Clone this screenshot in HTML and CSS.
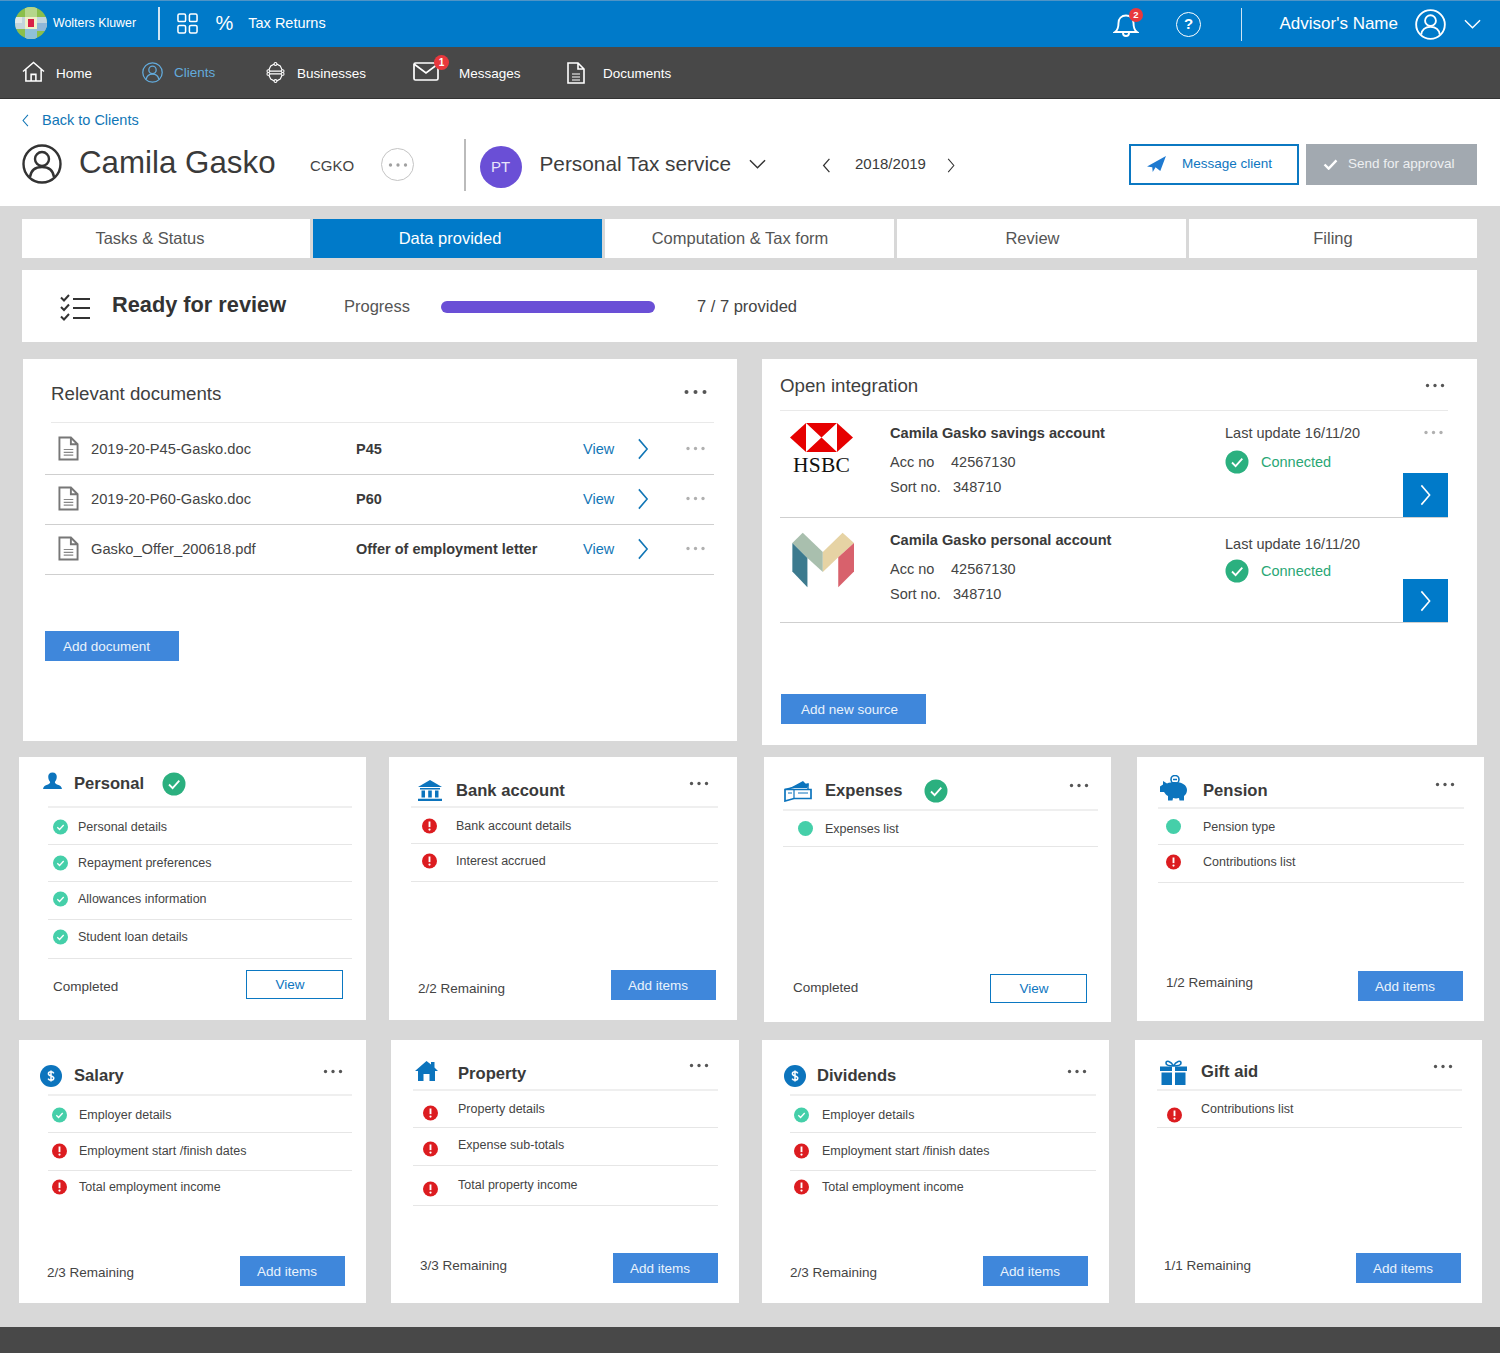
FILE: index.html
```html
<!DOCTYPE html>
<html lang="en">
<head>
<meta charset="utf-8">
<title>Camila Gasko - Data provided</title>
<link rel="stylesheet" href="styles.css">
</head>
<body>
<svg class="defs" width="0" height="0" aria-hidden="true">
  <symbol id="person" viewBox="0 0 40 40"><circle cx="20" cy="20" r="18.5" fill="none" stroke="currentColor" stroke-width="2.4"/><circle cx="20" cy="15" r="7" fill="none" stroke="currentColor" stroke-width="2.4"/><path d="M8 33c1-7 6-10 12-10s11 3 12 10" fill="none" stroke="currentColor" stroke-width="2.4"/></symbol>
  <symbol id="dots" viewBox="0 0 24 6"><circle cx="3" cy="3" r="2" fill="currentColor"/><circle cx="12" cy="3" r="2" fill="currentColor"/><circle cx="21" cy="3" r="2" fill="currentColor"/></symbol>
  <symbol id="ok" viewBox="0 0 16 16"><circle cx="8" cy="8" r="8" fill="#45cfa9"/><path d="M4.6 8.2l2.4 2.4 4.4-4.8" fill="none" stroke="#fff" stroke-width="1.4"/></symbol>
  <symbol id="bigok" viewBox="0 0 24 24"><circle cx="12" cy="12" r="11.5" fill="#2bb07f"/><path d="M7 12.5l3.6 3.6L17.3 8.6" fill="none" stroke="#fff" stroke-width="1.8"/></symbol>
  <symbol id="warn" viewBox="0 0 16 16"><circle cx="8" cy="8" r="8" fill="#dc1c20"/><path d="M8 3.2v6" stroke="#fff" stroke-width="2"/><circle cx="8" cy="11.8" r="1.2" fill="#fff"/></symbol>
  <symbol id="dollar" viewBox="0 0 22 22"><circle cx="11" cy="11" r="11" fill="#0c74bd"/><path d="M13.8 8.300c-.5-1-1.500-1.500-2.800-1.500-1.400 0-2.600.7-2.600 2 0 2.900 5.400 1.400 5.400 4.300 0 1.300-1.200 2.100-2.800 2.100-1.300 0-2.300-.6-2.900-1.600M11 5.400v11.200" fill="none" stroke="#fff" stroke-width="1.500"/></symbol>
  <symbol id="file" viewBox="0 0 22 26"><path d="M1.500 1.500h12l7 7v16h-19z M13.500 1.500v7h7" fill="none" stroke="#777" stroke-width="2"/><path d="M6 14h10M6 17h10M6 20h10" stroke="#888" stroke-width="1.200"/></symbol>
  <symbol id="chev" viewBox="0 0 12 24"><path d="M1.500 1.500L10.500 12 1.500 22.500" fill="none" stroke="currentColor" stroke-width="1.700"/></symbol>
  <symbol id="chevl" viewBox="0 0 10 18"><path d="M8.500 1L1.500 9l7 8" fill="none" stroke="currentColor" stroke-width="1.500"/></symbol>
  <symbol id="chevd" viewBox="0 0 18 10"><path d="M1 1l8 8 8-8" fill="none" stroke="currentColor" stroke-width="1.500"/></symbol>
</svg>

<header class="topbar">
  <div class="brand">
    <svg class="globe" viewBox="0 0 32 32" aria-hidden="true">
      <defs><clipPath id="globeclip"><ellipse cx="16" cy="16" rx="16" ry="16"/></clipPath></defs>
      <g clip-path="url(#globeclip)">
        <rect width="32" height="32" fill="#8bbf4c"/>
        <rect x="10" y="0" width="12" height="32" fill="#b5d68c"/>
        <rect x="0" y="10" width="32" height="12" fill="#c2d4dc"/>
        <rect x="0" y="10" width="7" height="6" fill="#dfe8e8"/>
        <rect x="22" y="16" width="10" height="8" fill="#8fb6d8"/>
        <rect x="10" y="22" width="12" height="10" fill="#8fc1d9"/>
        <rect x="10" y="10" width="12" height="12" fill="#eef0c8"/>
        <rect x="13" y="12" width="6" height="8" fill="#d81f47"/>
      </g>
    </svg>
    <span class="brand-name">Wolters Kluwer</span>
  </div>
  <span class="vsep vsep-a"></span>
  <svg class="apps" viewBox="0 0 22 22" aria-hidden="true"><g fill="none" stroke="#fff" stroke-width="1.600"><rect x="1" y="1" width="8" height="8" rx="1.500"/><rect x="13" y="1" width="8" height="8" rx="1.500"/><rect x="1" y="13" width="8" height="8" rx="1.500"/><rect x="13" y="13" width="8" height="8" rx="1.500"/></g></svg>
  <span class="percent">%</span>
  <span class="app-name">Tax Returns</span>
  <div class="top-right">
    <span class="icon-badge bell-wrap">
      <svg class="bell" viewBox="0 0 26 26" aria-hidden="true"><path d="M2 21c3-2 3.500-5 3.500-9 0-4.500 3-7.500 7.500-7.500s7.500 3 7.500 7.500c0 4 .5 7 3.500 9z M10 22c0 2 1.300 3 3 3s3-1 3-3" fill="none" stroke="#fff" stroke-width="1.900"/></svg>
      <span class="badge badge-bell">2</span>
    </span>
    <span class="help">?</span>
    <span class="vsep vsep-b"></span>
    <span class="advisor">Advisor's Name</span>
    <svg class="advisor-ico"><use href="#person"/></svg>
    <svg class="advisor-chev"><use href="#chevd"/></svg>
  </div>
</header>

<nav class="mainnav">
  <a class="nav-item nav-home">
    <svg class="nav-ico ico-home" viewBox="0 0 24 22" aria-hidden="true"><path d="M1 11L12 1.500 23 11M4 9v12h16V9M9.500 21v-7h5v7" fill="none" stroke="#fff" stroke-width="1.600"/></svg>
    Home
  </a>
  <a class="nav-item nav-clients">
    <svg class="nav-ico ico-clients"><use href="#person"/></svg>
    Clients
  </a>
  <a class="nav-item nav-biz">
    <svg class="nav-ico ico-biz" viewBox="0 0 20 22" aria-hidden="true"><g fill="none" stroke="#fff" stroke-width="1.300"><path d="M2.500 9.500L5 4l5-2.500L15 4l2.500 5.500z"/><path d="M2.500 12.500L5 18l5 2.500 5-2.500 2.500-5.500z"/></g><g fill="#484848" stroke="#fff" stroke-width="1.100"><circle cx="10" cy="2" r="1.500"/><circle cx="2.500" cy="9.500" r="1.500"/><circle cx="17.500" cy="9.500" r="1.500"/><circle cx="2.500" cy="12.500" r="1.500"/><circle cx="17.500" cy="12.500" r="1.500"/><circle cx="10" cy="20" r="1.500"/></g></svg>
    Businesses
  </a>
  <a class="nav-item nav-msg">
    <span class="icon-badge">
      <svg class="nav-ico ico-mail" viewBox="0 0 26 19" aria-hidden="true"><rect x="1" y="1" width="24" height="17" rx="1.500" fill="none" stroke="#fff" stroke-width="1.700"/><path d="M1 2l12 9 12-9" fill="none" stroke="#fff" stroke-width="1.700"/></svg>
      <span class="badge badge-mail">1</span>
    </span>
    Messages
  </a>
  <a class="nav-item nav-docs">
    <svg class="nav-ico ico-doc" viewBox="0 0 18 22" aria-hidden="true"><path d="M1 1h10l6 6v14H1z M11 1v6h6" fill="none" stroke="#fff" stroke-width="1.600"/><path d="M5 12h8M5 15h8M5 18h8" stroke="#fff" stroke-width="1.200"/></svg>
    Documents
  </a>
</nav>

<section class="subhead">
  <a class="back"><svg class="back-chev"><use href="#chevl"/></svg>Back to Clients</a>
  <div class="client-row">
    <svg class="client-ico"><use href="#person"/></svg>
    <h1 class="client-name">Camila Gasko</h1>
    <span class="client-code">CGKO</span>
    <span class="client-more"><svg class="client-dots"><use href="#dots"/></svg></span>
    <span class="client-sep"></span>
    <span class="pt">PT</span>
    <span class="service">Personal Tax service</span>
    <svg class="service-chev"><use href="#chevd"/></svg>
    <svg class="year-chev year-prev"><use href="#chevl"/></svg>
    <span class="year">2018/2019</span>
    <svg class="year-chev year-next"><use href="#chev"/></svg>
    <div class="actions">
      <button class="btn-message">
        <svg class="plane" viewBox="0 0 20 18" aria-hidden="true"><path d="M0 11L20 0 14 16 9 12l-3 5-.5-5z" fill="#1f7ad0"/></svg>
        Message client
      </button>
      <button class="btn-approve">
        <svg class="tick" viewBox="0 0 16 12" aria-hidden="true"><path d="M1.500 6l4.500 4.500L14.500 1.500" fill="none" stroke="#fff" stroke-width="2.600"/></svg>
        Send for approval
      </button>
    </div>
  </div>
</section>

<main class="content">
  <div class="tabs">
    <a class="tab tab-tasks">Tasks &amp; Status</a>
    <a class="tab tab-active">Data provided</a>
    <a class="tab tab-comp">Computation &amp; Tax form</a>
    <a class="tab tab-review">Review</a>
    <a class="tab tab-filing">Filing</a>
  </div>

  <div class="progress-panel">
    <svg class="checklist" viewBox="0 0 30 27" aria-hidden="true"><g fill="none" stroke="#333" stroke-width="2"><path d="M1 3.500l3 3L9 1M1 13l3 3 5-5.500M1 22.500l3 3 5-5.500"/><path d="M13 5h17M13 14h17M13 24h17"/></g></svg>
    <strong class="progress-title">Ready for review</strong>
    <span class="progress-label">Progress</span>
    <span class="progress-bar"></span>
    <span class="progress-count">7 / 7 provided</span>
  </div>

  <div class="top-cards">
    <section class="panel docs">
      <div class="docs-head">
        <h2 class="panel-title">Relevant documents</h2>
        <svg class="more more-dark docs-more"><use href="#dots"/></svg>
      </div>
      <div class="doc-row doc-first">
        <svg class="doc-ico"><use href="#file"/></svg>
        <span class="doc-name">2019-20-P45-Gasko.doc</span>
        <strong class="doc-type">P45</strong>
        <a class="doc-view">View</a>
        <svg class="doc-chev"><use href="#chev"/></svg>
        <svg class="more more-light"><use href="#dots"/></svg>
      </div>
      <div class="doc-row">
        <svg class="doc-ico"><use href="#file"/></svg>
        <span class="doc-name">2019-20-P60-Gasko.doc</span>
        <strong class="doc-type">P60</strong>
        <a class="doc-view">View</a>
        <svg class="doc-chev"><use href="#chev"/></svg>
        <svg class="more more-light"><use href="#dots"/></svg>
      </div>
      <div class="doc-row">
        <svg class="doc-ico"><use href="#file"/></svg>
        <span class="doc-name">Gasko_Offer_200618.pdf</span>
        <strong class="doc-type">Offer of employment letter</strong>
        <a class="doc-view">View</a>
        <svg class="doc-chev"><use href="#chev"/></svg>
        <svg class="more more-light"><use href="#dots"/></svg>
      </div>
      <button class="btn-fill btn-add-doc">Add document</button>
    </section>

    <section class="panel integ">
      <div class="integ-head">
        <h2 class="panel-title">Open integration</h2>
        <svg class="more more-dark integ-more"><use href="#dots"/></svg>
      </div>
      <div class="acct acct-a">
        <div class="acct-logo">
          <svg class="hsbc" viewBox="0 0 63 29" aria-hidden="true"><path d="M0 14.500L16 0h31l16 14.500L47 29H16z" fill="#e60000"/><path d="M16 0l15.500 14.500L16 29zM47 0L31.500 14.500 47 29z" fill="#fff"/></svg>
          <span class="hsbc-name">HSBC</span>
        </div>
        <div class="acct-info">
          <strong class="acct-title">Camila Gasko savings account</strong>
          <div class="acct-line"><span class="lbl-acc">Acc no</span><span>42567130</span></div>
          <div class="acct-line"><span class="lbl-sort">Sort no.</span><span>348710</span></div>
        </div>
        <div class="acct-status">
          <div class="update-row"><span>Last update 16/11/20</span><svg class="more more-light acct-more"><use href="#dots"/></svg></div>
          <div class="conn"><svg class="conn-ico"><use href="#bigok"/></svg>Connected</div>
          <a class="go"><svg class="go-chev"><use href="#chev"/></svg></a>
        </div>
      </div>
      <div class="acct acct-b">
        <div class="acct-logo">
          <svg class="monzo" viewBox="90 400 197 172" aria-hidden="true"><path d="M97 435l31-30 60 57v60l-46-42z" fill="#a9bfae"/><path d="M188 462l59-57 34 30-47 43-46 44z" fill="#e6d3a4"/><path d="M97 435l45 45v87l-45-47z" fill="#3c7a8e"/><path d="M281 435v85l-47 47v-89z" fill="#d8616c"/></svg>
        </div>
        <div class="acct-info">
          <strong class="acct-title">Camila Gasko personal account</strong>
          <div class="acct-line"><span class="lbl-acc">Acc no</span><span>42567130</span></div>
          <div class="acct-line"><span class="lbl-sort">Sort no.</span><span>348710</span></div>
        </div>
        <div class="acct-status">
          <div class="update-row"><span>Last update 16/11/20</span></div>
          <div class="conn"><svg class="conn-ico"><use href="#bigok"/></svg>Connected</div>
          <a class="go"><svg class="go-chev"><use href="#chev"/></svg></a>
        </div>
      </div>
      <button class="btn-fill btn-add-src">Add new source</button>
    </section>
  </div>

  <div class="card-row row-one">
    <article class="card c-personal">
      <div class="head">
        <span class="ico"><svg class="i-user" viewBox="0 0 20 18" aria-hidden="true"><path d="M10 0c3 0 4.500 2 4.500 4.500 0 2.500-1.200 4.500-2 5.500 0 1.500 1 2 3 3 2 .8 4 1.500 4.500 4.500H0C.5 14.500 2.500 13.800 4.500 13c2-1 3-1.500 3-3-.8-1-2-3-2-5.500C5.500 2 7 0 10 0z" fill="#0c74bd"/></svg></span>
        <h3 class="title">Personal</h3>
        <svg class="done"><use href="#bigok"/></svg>
      </div>
      <ul class="list">
        <li class="item"><svg class="st"><use href="#ok"/></svg>Personal details</li>
        <li class="item"><svg class="st"><use href="#ok"/></svg>Repayment preferences</li>
        <li class="item"><svg class="st"><use href="#ok"/></svg>Allowances information</li>
        <li class="item"><svg class="st"><use href="#ok"/></svg>Student loan details</li>
      </ul>
      <div class="foot"><span class="foot-label">Completed</span><button class="btn-line">View</button></div>
    </article>

    <article class="card c-bank">
      <div class="head">
        <span class="ico"><svg class="i-bank" viewBox="0 0 24 21" aria-hidden="true"><path d="M12 0l12 7H0z" fill="#0c74bd"/><path d="M2 8h20v1.500H2zM3.500 10.500h3.500v7H3.500zM10.200 10.500h3.600v7h-3.600zM17 10.500h3.500v7H17zM0 18.800h24V21H0z" fill="#0c74bd"/></svg></span>
        <h3 class="title">Bank account</h3>
        <svg class="more more-dark"><use href="#dots"/></svg>
      </div>
      <ul class="list">
        <li class="item"><svg class="st"><use href="#warn"/></svg>Bank account details</li>
        <li class="item"><svg class="st"><use href="#warn"/></svg>Interest accrued</li>
      </ul>
      <div class="foot"><span class="foot-label">2/2 Remaining</span><button class="btn-fill btn-items">Add items</button></div>
    </article>

    <article class="card c-exp">
      <div class="head">
        <span class="ico"><svg class="i-exp" viewBox="0 0 28 22" aria-hidden="true"><path d="M1 9.500L24 4v5" fill="none" stroke="#0c74bd" stroke-width="1.400"/><path d="M6 8l13-7 3 3 3 .5L23 8z" fill="#0c74bd"/><path d="M1 9.500h26v9H10L1 21z" fill="#fff" stroke="#0c74bd" stroke-width="1.700"/><path d="M10 10v8M4 13h4M14 13h10" stroke="#0c74bd" stroke-width="1.200"/></svg></span>
        <h3 class="title">Expenses</h3>
        <svg class="done"><use href="#bigok"/></svg>
        <svg class="more more-dark"><use href="#dots"/></svg>
      </div>
      <ul class="list">
        <li class="item"><span class="dot"></span>Expenses list</li>
      </ul>
      <div class="foot"><span class="foot-label">Completed</span><button class="btn-line">View</button></div>
    </article>

    <article class="card c-pension">
      <div class="head">
        <span class="ico"><svg class="i-pig" viewBox="0 0 29 26" aria-hidden="true"><circle cx="15" cy="4.500" r="4" fill="none" stroke="#0c74bd" stroke-width="1.600"/><path d="M13 4.500h4" stroke="#0c74bd" stroke-width="1.500"/><path d="M3 6l4 2.500c2-1 5-1.500 8-1.500 7 0 12 3 12 8 0 3-1.500 5-3 6v4.500h-4.500l-.5-2.500c-2 .5-4 .5-6 0l-.5 2.500H8V21c-2-1-3-2.500-4-4H0v-5.500l3-2z" fill="#0c74bd"/></svg></span>
        <h3 class="title">Pension</h3>
        <svg class="more more-dark"><use href="#dots"/></svg>
      </div>
      <ul class="list">
        <li class="item"><span class="dot"></span>Pension type</li>
        <li class="item"><svg class="st"><use href="#warn"/></svg>Contributions list</li>
      </ul>
      <div class="foot"><span class="foot-label">1/2 Remaining</span><button class="btn-fill btn-items">Add items</button></div>
    </article>
  </div>

  <div class="card-row row-two">
    <article class="card c-salary">
      <div class="head">
        <span class="ico"><svg class="i-dollar"><use href="#dollar"/></svg></span>
        <h3 class="title">Salary</h3>
        <svg class="more more-dark"><use href="#dots"/></svg>
      </div>
      <ul class="list">
        <li class="item"><svg class="st"><use href="#ok"/></svg>Employer details</li>
        <li class="item"><svg class="st"><use href="#warn"/></svg>Employment start /finish dates</li>
        <li class="item"><svg class="st"><use href="#warn"/></svg>Total employment income</li>
      </ul>
      <div class="foot"><span class="foot-label">2/3 Remaining</span><button class="btn-fill btn-items">Add items</button></div>
    </article>

    <article class="card c-property">
      <div class="head">
        <span class="ico"><svg class="i-house" viewBox="0 0 23 20" aria-hidden="true"><path d="M11.500 0l4.500 3.500V1h3.500v5.500L23 10h-3v10h-5.500v-7h-6v7H3V10H0z" fill="#0c74bd"/></svg></span>
        <h3 class="title">Property</h3>
        <svg class="more more-dark"><use href="#dots"/></svg>
      </div>
      <ul class="list">
        <li class="item"><svg class="st"><use href="#warn"/></svg>Property details</li>
        <li class="item"><svg class="st"><use href="#warn"/></svg>Expense sub-totals</li>
        <li class="item"><svg class="st"><use href="#warn"/></svg>Total property income</li>
      </ul>
      <div class="foot"><span class="foot-label">3/3 Remaining</span><button class="btn-fill btn-items">Add items</button></div>
    </article>

    <article class="card c-div">
      <div class="head">
        <span class="ico"><svg class="i-dollar"><use href="#dollar"/></svg></span>
        <h3 class="title">Dividends</h3>
        <svg class="more more-dark"><use href="#dots"/></svg>
      </div>
      <ul class="list">
        <li class="item"><svg class="st"><use href="#ok"/></svg>Employer details</li>
        <li class="item"><svg class="st"><use href="#warn"/></svg>Employment start /finish dates</li>
        <li class="item"><svg class="st"><use href="#warn"/></svg>Total employment income</li>
      </ul>
      <div class="foot"><span class="foot-label">2/3 Remaining</span><button class="btn-fill btn-items">Add items</button></div>
    </article>

    <article class="card c-gift">
      <div class="head">
        <span class="ico"><svg class="i-gift" viewBox="0 0 27 25" aria-hidden="true"><path d="M13.500 6C11 1 6 0 6 3c0 2.500 4 3 7.500 3zM13.500 6C16 1 21 0 21 3c0 2.500-4 3-7.500 3z" fill="none" stroke="#0c74bd" stroke-width="1.600"/><path d="M0 6.500h12v4.500H0zM15 6.500h12v4.500H15zM1.500 12.500H12V25H1.500zM15 12.500h10.500V25H15z" fill="#0c74bd"/></svg></span>
        <h3 class="title">Gift aid</h3>
        <svg class="more more-dark"><use href="#dots"/></svg>
      </div>
      <ul class="list">
        <li class="item"><svg class="st"><use href="#warn"/></svg>Contributions list</li>
      </ul>
      <div class="foot"><span class="foot-label">1/1 Remaining</span><button class="btn-fill btn-items">Add items</button></div>
    </article>
  </div>
</main>

<footer class="pagefoot"></footer>
</body>
</html>
```
FILE: styles.css
```css
* { box-sizing: border-box; }
html, body { margin: 0; padding: 0; }
body {
  width: 1500px;
  height: 1353px;
  overflow: hidden;
  background: #d8d8d8;
  font-family: "Liberation Sans", Arial, sans-serif;
  color: #333;
  display: flex;
  flex-direction: column;
}
h1, h2, h3, ul { margin: 0; padding: 0; font-weight: normal; }
ul { list-style: none; }
svg { display: block; flex: none; }
.defs { position: absolute; }
button { font-family: inherit; cursor: pointer; }

/* top bar */
.topbar {
  height: 47px;
  flex: none;
  background: #007ac9;
  border-top: 1px solid #4f94c6;
  color: #fff;
  display: flex;
  align-items: center;
  padding-left: 15px;
}
.brand { display: flex; align-items: center; width: 143px; }
.globe { width: 32px; height: 32px; margin-top: -2px; }
.brand-name { font-size: 12.4px; margin-left: 6px; margin-top: -2px; white-space: nowrap; }
.vsep { width: 1.5px; height: 33px; background: #cfe4f3; }
.vsep-a { margin-top: -1px; }
.apps { width: 21px; height: 21px; margin-left: 17px; margin-top: -1px; }
.percent { font-size: 20px; margin-left: 18px; margin-top: -3px; line-height: 1; }
.app-name { font-size: 14.5px; margin-left: 15px; margin-top: -3px; }
.top-right { margin-left: auto; display: flex; align-items: center; }
.icon-badge { position: relative; display: block; }
.bell { width: 26px; height: 26px; margin-top: -1px; margin-left: 1px; }
.badge {
  position: absolute;
  width: 14px; height: 14px;
  border-radius: 50%;
  background: #e8383d;
  color: #fff;
  font-size: 9.5px;
  font-weight: bold;
  line-height: 14px;
  text-align: center;
}
.badge-bell { left: 17px; top: -4px; }
.help {
  width: 25px; height: 25px;
  margin-left: 37px;
  border: 1.8px solid #fff;
  border-radius: 50%;
  font-size: 15px;
  font-weight: bold;
  line-height: 22px;
  text-align: center;
  margin-top: 1px;
}
.vsep-b { margin-left: 40px; }
.advisor { font-size: 17px; margin-left: 37px; margin-top: -1px; white-space: nowrap; }
.advisor-ico { width: 31px; height: 31px; margin-left: 17px; color: #fff; }
.advisor-chev { width: 17px; height: 10px; margin-left: 18px; margin-right: 19px; color: #fff; }

/* nav */
.mainnav {
  height: 52px;
  flex: none;
  background: #484848;
  border-bottom: 1px solid #333;
  display: flex;
  align-items: center;
  padding-left: 22px;
}
.nav-item { display: flex; align-items: center; color: #fff; font-size: 13.5px; white-space: nowrap; padding-top: 1px; }
.nav-home { width: 120px; }
.nav-clients { width: 124px; color: #63abdc; margin-top: -2px; }
.nav-biz { width: 147px; }
.nav-msg { width: 154px; }
.nav-ico { flex: none; }
.ico-home { width: 23px; height: 21px; margin-right: 11px; margin-top: -3px; }
.ico-clients { width: 21px; height: 21px; margin-right: 11px; color: #63abdc; }
.ico-biz { width: 19px; height: 21px; margin-right: 12px; margin-top: -2px; }
.ico-mail { width: 26px; height: 19px; margin-right: 20px; margin-top: -4px; }
.badge-mail { left: 21px; top: -11px; width: 15px; height: 15px; line-height: 15px; font-size: 10px; }
.ico-doc { width: 18px; height: 22px; margin-right: 18px; }

/* client header */
.subhead {
  height: 107px;
  flex: none;
  background: #fff;
  padding-left: 22px;
}
.back {
  display: flex;
  align-items: center;
  color: #1176b6;
  font-size: 14.5px;
  height: 20px;
  margin-top: 11px;
}
.back-chev { width: 7px; height: 13px; margin-right: 13px; }
.client-row { display: flex; align-items: center; height: 58px; margin-top: 5px; }
.client-ico { width: 40px; height: 40px; color: #333; }
.client-name { font-size: 31.3px; margin-left: 17px; white-space: nowrap; color: #3a3a3a; width: 231px; margin-top: -2px; }
.client-code { font-size: 15px; width: 71px; margin-top: 3px; color: #444; }
.client-more {
  width: 33px; height: 33px;
  border: 1.500px solid #c4c4c4;
  border-radius: 50%;
  display: flex;
  align-items: center;
  justify-content: center;
  margin-top: 1px;
}
.client-dots { width: 20px; height: 6px; color: #a0a0a0; }
.client-sep { width: 1.500px; height: 52px; background: #bbb; margin-left: 50px; margin-top: 2px; }
.pt {
  width: 42px; height: 42px;
  border-radius: 50%;
  background: #6a4fd6;
  color: #e8e4fa;
  font-size: 15px;
  line-height: 42px;
  text-align: center;
  margin-left: 14px;
  margin-top: 6px;
}
.service { font-size: 20.8px; margin-left: 18px; color: #3d3d3d; white-space: nowrap; margin-top: -1px; }
.service-chev { width: 17px; height: 10px; margin-left: 18px; color: #333; }
.year-chev { color: #333; }
.year-prev { width: 9px; height: 15px; margin-left: 56px; margin-top: 2px; }
.year { font-size: 15px; margin-left: 24px; color: #3a3a3a; margin-top: -1px; }
.year-next { width: 8px; height: 15px; margin-left: 21px; margin-top: 2px; }
.actions { display: flex; gap: 7px; margin-left: auto; margin-right: 23px; margin-top: 1px; }
.btn-message, .btn-approve {
  height: 41px;
  width: 170px;
  display: flex;
  align-items: center;
  font-size: 13.5px;
  padding: 0 0 2px;
}
.btn-message { background: #fff; border: 2px solid #0b78c2; color: #0e76c0; }
.plane { width: 19px; height: 17px; margin-left: 16px; margin-right: 16px; margin-top: 2px; }
.btn-approve { width: 171px; background: #a2a9b0; border: 0; color: #eef0f2; }
.tick { width: 15px; height: 11px; margin-left: 17px; margin-right: 10px; margin-top: 2px; }

/* tabs + progress */
.content { flex: 1; min-height: 0; }
.tabs {
  display: flex;
  gap: 3px;
  padding-left: 22px;
  margin-top: 13px;
}
.tab {
  width: 289px;
  height: 39px;
  background: #fff;
  color: #555;
  font-size: 16.500px;
  line-height: 39px;
  text-align: center;
}
.tab-tasks { width: 288px; padding-right: 32px; }
.tab-active { background: #007ac9; color: #fff; padding-right: 15px; }
.tab-comp { padding-right: 19px; }
.tab-review { padding-right: 18px; }
.tab-filing { width: 288px; }
.progress-panel {
  margin: 12px 0 0 22px;
  width: 1455px;
  height: 72px;
  background: #fff;
  display: flex;
  align-items: center;
  padding-left: 38px;
}
.checklist { width: 30px; height: 27px; margin-top: 2px; }
.progress-title { font-size: 21.750px; margin-left: 22px; color: #333; margin-top: -2px; white-space: nowrap; width: 232px; }
.progress-label { font-size: 16.500px; color: #555; width: 97px; margin-top: 1px; }
.progress-bar { width: 214px; height: 12px; border-radius: 6px; background: #6a4fd6; margin-top: 1px; }
.progress-count { font-size: 16.500px; margin-left: 42px; color: #444; margin-top: 1px; }

/* top panels */
.top-cards { display: flex; align-items: flex-start; margin-top: 17px; height: 398px; }
.panel { background: #fff; position: relative; display: flex; flex-direction: column; }
.panel-title { font-size: 18.700px; color: #404040; white-space: nowrap; }
.more { color: #555; }
.more-dark { width: 22px; height: 5px; }
.more-light { width: 23px; height: 5px; color: #b0b0b0; }
.docs { width: 714px; height: 382px; margin-left: 23px; }
.docs-head {
  height: 64px;
  margin-left: 28px;
  margin-right: 23px;
  padding-right: 5px;
  display: flex;
  align-items: center;
  justify-content: space-between;
  border-bottom: 1px solid #e9e9e9;
}
.docs-head .panel-title { margin-top: 6px; }
.docs-more { width: 27px; height: 6px; margin-top: 3px; }
.doc-row {
  height: 50px;
  margin-left: 22px;
  margin-right: 23px;
  padding-left: 13px;
  padding-bottom: 2px;
  display: flex;
  align-items: center;
  border-bottom: 1px solid #cfcfcf;
}
.doc-first { height: 52px; padding-bottom: 0; }
.doc-ico { width: 21px; height: 25px; }
.doc-name { font-size: 14.700px; margin-left: 12px; width: 265px; color: #444; white-space: nowrap; }
.doc-type { font-size: 14.500px; width: 227px; color: #3a3a3a; white-space: nowrap; }
.doc-view { font-size: 14.500px; color: #1176b6; width: 54px; }
.doc-chev { width: 12px; height: 22px; color: #1176b6; }
.doc-row .more-light { margin-left: 35px; margin-top: 0; }
.btn-fill {
  border: 0;
  background: #3f87db;
  color: #eaf3fc;
  font-size: 13.500px;
  padding: 0;
  height: 30px;
}
.btn-add-doc { width: 134px; margin: 56px 0 0 22px; padding-right: 11px; }

.integ { width: 715px; height: 386px; margin-left: 25px; }
.integ-head {
  height: 52px;
  margin-left: 18px;
  margin-right: 29px;
  padding-right: 2px;
  display: flex;
  align-items: center;
  justify-content: space-between;
  border-bottom: 1px solid #e9e9e9;
}
.integ-head .panel-title { margin-top: 3px; }
.integ-more { margin-top: 1px; }
.acct {
  margin-left: 18px;
  margin-right: 29px;
  display: flex;
  border-bottom: 1px solid #cfcfcf;
}
.acct-a { height: 107px; }
.acct-b { height: 105px; }
.acct-logo { width: 110px; padding-left: 10px; display: flex; flex-direction: column; }
.acct-a .acct-logo { padding-top: 12px; }
.acct-b .acct-logo { padding-top: 13px; }
.hsbc { width: 63px; height: 29px; }
.hsbc-name { font-family: "Liberation Serif", serif; font-size: 21.500px; line-height: 22px; margin-top: 2px; margin-left: 3px; color: #111; letter-spacing: .2px; }
.monzo { width: 66px; height: 58px; }
.acct-info { width: 335px; padding-top: 12px; }
.acct-title { display: block; font-size: 14.600px; line-height: 20px; color: #3a3a3a; white-space: nowrap; }
.acct-line { display: flex; font-size: 14.500px; line-height: 25px; color: #444; margin-top: 0; }
.acct-title + .acct-line { margin-top: 7px; }
.lbl-acc { width: 61px; }
.lbl-sort { width: 63px; }
.acct-status { flex: 1; display: flex; flex-direction: column; font-size: 14.500px; color: #444; padding-top: 12px; }
.acct-b .acct-status { padding-top: 16px; }
.update-row { display: flex; align-items: center; justify-content: space-between; height: 20px; padding-right: 3px; white-space: nowrap; }
.acct-more { margin-top: -2px; }
.conn { display: flex; align-items: center; color: #2aa775; margin-top: 7px; margin-bottom: -10px; height: 24px; }
.acct-b .conn { margin-top: 5px; }
.conn-ico { width: 24px; height: 24px; margin-right: 12px; }
.go {
  margin-top: auto;
  flex: none;
  align-self: flex-end;
  width: 45px;
  height: 44px;
  background: #007ac9;
  color: #fff;
  display: flex;
  align-items: center;
  justify-content: center;
}
.acct-b .go { height: 43px; }
.go-chev { width: 11px; height: 22px; }
.btn-add-src { width: 145px; margin: 71px 0 0 19px; padding-right: 8px; }

/* category cards */
.card-row { display: flex; align-items: flex-start; }
.row-one { height: 283px; }
.card {
  background: #fff;
  display: flex;
  flex-direction: column;
  width: 348px;
  --ll: 29px;
  --lr: 14px;
  --hh: 51px;
  --hp: 18px;
  --dm: -10px;
  --il: 0px;
  --tx: 40px;
  --sx: 5px;
  --rx: 30px;
  --fl: 29px;
  --fr: 21px;
  --fb: 20px;
  --lo: 0px;
}
.head {
  height: var(--hh);
  padding-top: var(--hp);
  margin: 0 var(--lr) 0 var(--ll);
  display: flex;
  align-items: center;
  border-bottom: 2px solid #efefef;
}
.ico {
  width: calc(var(--tx) - var(--il));
  margin-left: var(--il);
  display: block;
  flex: none;
}
.title { font-size: 16.600px; font-weight: bold; color: #3a3a3a; white-space: nowrap; }
.done { width: 24px; height: 24px; margin-left: 18px; }
.head .more { margin-left: auto; margin-right: 8px; margin-top: var(--dm); }
.list { margin: 0 var(--lr) 0 var(--ll); display: grid; }
.item {
  display: flex;
  align-items: center;
  font-size: 12.500px;
  color: #444;
  border-bottom: 1px solid #e6e6e6;
  padding-bottom: 4px;
  padding-left: var(--sx);
  white-space: nowrap;
}
.item:first-child { padding-bottom: 0; }
.st { width: 15px; height: 16px; margin-right: calc(var(--rx) - var(--sx) - 15px); }
.dot { width: 15px; height: 15px; border-radius: 50%; background: #45cfa9; margin-right: calc(var(--rx) - var(--sx) - 15px); }
.foot {
  margin-top: auto;
  padding: 0 var(--fr) var(--fb) var(--fl);
  display: flex;
  align-items: center;
  justify-content: space-between;
}
.foot-label { font-size: 13.500px; color: #444; margin-top: var(--lo); }
.btn-line {
  width: 97px;
  height: 29px;
  padding: 0 9px 0 0;
  background: #fff;
  border: 1.500px solid #0b78c2;
  color: #0e76c0;
  font-size: 13.500px;
}
.btn-items { width: 105px; padding-right: 11px; }

.i-user { width: 19px; height: 18px; margin-top: -6px; }
.i-bank { width: 24px; height: 21px; }
.i-exp { width: 28px; height: 22px; }
.i-pig { width: 29px; height: 26px; margin-top: -6px; }
.i-dollar { width: 22px; height: 22px; }
.i-house { width: 23px; height: 20px; margin-top: -6px; }
.i-gift { width: 27px; height: 25px; margin-top: 2px; }

.c-personal { height: 263px; width: 347px; margin-left: 19px; --hp: 4px; --il: -5px; --tx: 26px; --sx: 5px; --rx: 30px; --fl: 34px; --fr: 23px; --fb: 21px; --lo: 3px; }
.c-personal .list { grid-template-rows: 37px 37px 38px 39px; }
.c-personal .item:first-child { padding-top: 2px; }
.c-personal .item:nth-child(2) { padding-bottom: 1px; }
.c-bank { height: 263px; margin-left: 23px; --ll: 22px; --lr: 19px; --hp: 18px; --dm: -14px; --il: 7px; --tx: 45px; --sx: 11px; --rx: 45px; --fb: 20px; --lo: 6px; }
.c-bank .list { grid-template-rows: 36px 38px; }
.c-exp { height: 265px; width: 347px; margin-left: 27px; --ll: 19px; --lr: 13px; --hh: 54px; --hp: 15px; --il: 1px; --tx: 42px; --sx: 15px; --rx: 42px; --fr: 24px; --fb: 19px; --lo: -3px; }
.c-exp .list { grid-template-rows: 36px; }
.c-exp .done { margin-left: 22px; }
.c-pension { height: 264px; width: 347px; margin-left: 26px; --ll: 21px; --lr: 20px; --hh: 52px; --hp: 17px; --dm: -12px; --il: 2px; --tx: 45px; --sx: 8px; --rx: 45px; --lo: -8px; }
.c-pension .list { grid-template-rows: 36px 38px; }
.c-salary { height: 263px; width: 347px; margin-left: 19px; --hh: 56px; --hp: 17px; --dm: -8px; --il: -8px; --tx: 26px; --sx: 4px; --rx: 31px; --fl: 28px; --fb: 17px; --lo: 2px; }
.c-salary .list, .c-div .list { grid-template-rows: 37px 38px 34px; }
.c-salary .item, .c-div .item { padding-bottom: 2px; }
.c-salary .item:first-child, .c-div .item:first-child { padding-bottom: 0; padding-top: 1px; }
.c-salary .item:last-child, .c-div .item:last-child { border-bottom: 0; }
.c-property { height: 263px; margin-left: 25px; --ll: 22px; --lr: 21px; --hp: 18px; --dm: -16px; --il: 2px; --tx: 45px; --sx: 10px; --rx: 45px; --lo: -6px; }
.c-property .list { grid-template-rows: 37px 38px 40px; }
.c-property .item:last-child { padding-bottom: 2px; }
.c-property .st { margin-top: 8px; }
.c-div { height: 263px; width: 347px; margin-left: 23px; --ll: 28px; --lr: 13px; --hh: 56px; --hp: 17px; --dm: -8px; --il: -6px; --tx: 27px; --sx: 4px; --rx: 32px; --fl: 28px; --fb: 17px; --lo: 2px; }
.c-gift { height: 263px; width: 347px; margin-left: 26px; --ll: 22px; --lr: 20px; --hp: 14px; --il: 3px; --tx: 44px; --sx: 10px; --rx: 44px; --lo: -6px; }
.c-gift .list { grid-template-rows: 37px; }
.c-gift .st { margin-top: 12px; }

.pagefoot { height: 26px; flex: none; background: #484848; }
```
